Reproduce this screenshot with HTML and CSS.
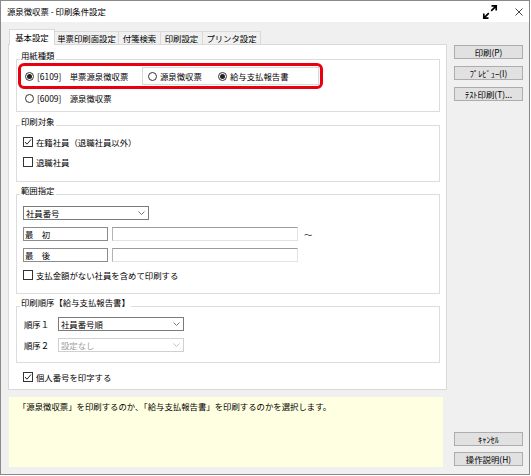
FILE: index.html
```html
<!DOCTYPE html>
<html lang="ja">
<head>
<meta charset="utf-8">
<title>源泉徴収票 - 印刷条件設定</title>
<link rel="stylesheet" href="styles.css">
</head>
<body>
<div class="window">
  <div class="titlebar">
    <div class="title">源泉徴収票 - 印刷条件設定</div>
    <div class="title-icons">
      <svg class="icon-expand" width="16" height="16" viewBox="0 0 16 16"><path d="M9.2 6.8 L14.2 1.8 M9.5 1.8 H14.2 V6.5 M6.8 9.2 L1.8 14.2 M1.8 9.5 V14.2 H6.5" fill="none" stroke="#000" stroke-width="1.7"/></svg>
      <svg class="icon-close" width="8" height="8" viewBox="0 0 8 8"><path d="M0.5 0.5 L7.5 7.5 M7.5 0.5 L0.5 7.5" fill="none" stroke="#333" stroke-width="0.9"/></svg>
    </div>
  </div>
  <div class="client">
    <div class="main">
      <div class="tabs">
        <div class="tab active t1">基本設定</div>
        <div class="tab t2">単票印刷面設定</div>
        <div class="tab t3">付箋検索</div>
        <div class="tab t4">印刷設定</div>
        <div class="tab t5">プリンタ設定</div>
      </div>
      <div class="panel">
        <div class="group g1">
          <div class="group-title">用紙種類</div>
          <div class="highlight">
            <div class="opt"><span class="radio checked"></span><span>[6109]　単票源泉徴収票</span></div>
            <div class="subframe">
              <div class="opt opt-w"><span class="radio"></span><span>源泉徴収票</span></div>
              <div class="opt"><span class="radio checked"></span><span>給与支払報告書</span></div>
            </div>
          </div>
          <div class="opt row row-radio"><span class="radio"></span><span>[6009]　源泉徴収票</span></div>
        </div>

        <div class="group g2">
          <div class="group-title">印刷対象</div>
          <div class="opt row chk1"><span class="check on"><svg width="8" height="8" viewBox="0 0 8 8"><path d="M1 4 L3 6.2 L7 1.5" fill="none" stroke="#222" stroke-width="1"/></svg></span><span>在籍社員（退職社員以外）</span></div>
          <div class="opt row chk2"><span class="check"></span><span>退職社員</span></div>
        </div>

        <div class="group g3">
          <div class="group-title">範囲指定</div>
          <div class="select sel-range"><span>社員番号</span><svg width="7" height="4" viewBox="0 0 7 4"><path d="M0.5 0.5 L3.5 3.5 L6.5 0.5" fill="none" stroke="#666" stroke-width="0.9"/></svg></div>
          <div class="range-row r1">
            <div class="label-box">最　初</div>
            <div class="input"></div>
            <span class="tilde">～</span>
          </div>
          <div class="range-row r2">
            <div class="label-box">最　後</div>
            <div class="input"></div>
          </div>
          <div class="opt row chk3"><span class="check"></span><span>支払金額がない社員を含めて印刷する</span></div>
        </div>

        <div class="group g4">
          <div class="group-title">印刷順序【給与支払報告書】</div>
          <div class="order-row o1">
            <span class="order-label">順序１</span>
            <div class="select sel-order"><span>社員番号順</span><svg width="7" height="4" viewBox="0 0 7 4"><path d="M0.5 0.5 L3.5 3.5 L6.5 0.5" fill="none" stroke="#666" stroke-width="0.9"/></svg></div>
          </div>
          <div class="order-row o2">
            <span class="order-label">順序２</span>
            <div class="select sel-order disabled"><span>設定なし</span><svg width="7" height="4" viewBox="0 0 7 4"><path d="M0.5 0.5 L3.5 3.5 L6.5 0.5" fill="none" stroke="#bbb" stroke-width="0.9"/></svg></div>
          </div>
        </div>

        <div class="opt row chk4"><span class="check on"><svg width="8" height="8" viewBox="0 0 8 8"><path d="M1 4 L3 6.2 L7 1.5" fill="none" stroke="#222" stroke-width="1"/></svg></span><span>個人番号を印字する</span></div>
      </div>
      <div class="hint">「源泉徴収票」を印刷するのか、「給与支払報告書」を印刷するのかを選択します。</div>
    </div>
    <div class="side">
      <div class="btn-group">
        <div class="btn">印刷(P)</div>
        <div class="btn">ﾌﾟﾚﾋﾞｭｰ(I)</div>
        <div class="btn">ﾃｽﾄ印刷(T)...</div>
      </div>
      <div class="btn-group btn-group-bottom">
        <div class="btn">ｷｬﾝｾﾙ</div>
        <div class="btn">操作説明(H)</div>
      </div>
    </div>
  </div>
</div>
</body>
</html>
```
FILE: styles.css
```css
* { box-sizing: border-box; }
html, body { margin: 0; padding: 0; background: #fff; }
body {
  font-family: "Noto Sans CJK JP", "Noto Sans", sans-serif;
  font-size: 8.4px;
  color: #000;
  line-height: 1;
}
.window {
  width: 530px;
  height: 475px;
  border: 1px solid #8a8a8a;
  background: #f0f0f0;
  display: flex;
  flex-direction: column;
}
.titlebar {
  height: 21px;
  flex: none;
  background: #fff;
  display: flex;
  align-items: center;
  justify-content: space-between;
  padding-left: 6px;
  padding-right: 6px;
}
.title-icons { display: flex; align-items: center; }
.icon-expand { margin-right: 17px; }
.client {
  flex: 1;
  display: flex;
  gap: 7px;
  padding: 7px 6px 7px 7px;
}
.main { width: 439px; display: flex; flex-direction: column; }
.tabs {
  display: flex;
  align-items: flex-end;
  height: 16px;
  padding-left: 1px;
  margin-bottom: -1px;
}
.tab {
  height: 13px;
  margin-bottom: 1px;
  border: 1px solid #d9d9d9;
  border-bottom: none;
  background: #f0f0f0;
  display: flex;
  align-items: center;
  justify-content: center;
  margin-left: -1px;
}
.tab.t1 { margin-left: 0; width: 46px; }
.tab.t2 { width: 65px; }
.tab.t3 { width: 43px; }
.tab.t4 { width: 43px; }
.tab.t5 { width: 59px; }
.tab.active {
  height: 16px;
  margin-bottom: 0;
  background: #fff;
  position: relative;
  z-index: 1;
}
.panel {
  height: 346px;
  background: #fff;
  border: 1px solid #d9d9d9;
  padding: 14px 6px 0 7px;
}
.group {
  border: 1px solid #dcdcdc;
  padding: 0 6px;
}
.group-title {
  width: fit-content;
  height: 11px;
  line-height: 11px;
  background: #fff;
  margin: -10px 0 0 -3px;
  padding: 0 1px;
}
.g1 { padding-bottom: 6px; }
.g2 { margin-top: 13px; padding-bottom: 12px; }
.g3 { margin-top: 12px; padding-bottom: 11px; }
.g4 { margin-top: 12px; padding-bottom: 10px; }

.opt { display: flex; align-items: center; white-space: nowrap; }
.row { height: 14px; }
.radio {
  width: 9px;
  height: 9px;
  border: 1px solid #333;
  border-radius: 50%;
  background: #fff;
  margin-right: 3px;
  flex: none;
  display: flex;
  align-items: center;
  justify-content: center;
}
.radio.checked::after {
  content: "";
  width: 5px;
  height: 5px;
  border-radius: 50%;
  background: #222;
}
.check {
  width: 10px;
  height: 10px;
  border: 1px solid #333;
  background: #fff;
  margin-right: 3px;
  flex: none;
  display: flex;
  align-items: center;
  justify-content: center;
}

.highlight {
  margin-top: 2px;
  margin-left: -5px;
  width: 305px;
  height: 26px;
  border: 3px solid #e8000f;
  border-radius: 6px;
  display: flex;
  align-items: center;
  padding: 0 1px 0 4px;
}
.subframe {
  margin-left: auto;
  width: 177px;
  height: 18px;
  border: 1px solid #d9d9d9;
  display: flex;
  align-items: center;
  padding-left: 5px;
}
.opt-w { width: 70px; }
.row-radio { margin-top: 2px; padding-left: 2px; }

.chk1 { margin-top: 8px; }
.chk2 { margin-top: 6px; }

.select {
  height: 14px;
  border: 1px solid #7a7a7a;
  background: #fff;
  display: flex;
  align-items: center;
  justify-content: space-between;
  padding: 0 3px 0 2px;
}
.sel-range { width: 126px; margin-top: 10px; }
.range-row { display: flex; align-items: center; height: 14px; margin-top: 7px; }
.label-box {
  width: 85px;
  height: 14px;
  border: 1px solid #8c8c8c;
  background: #fff;
  display: flex;
  align-items: center;
  padding-left: 1px;
}
.input {
  width: 186px;
  height: 14px;
  margin-left: 4px;
  background: #fff;
  border-top: 1px solid #9a9a9a;
  border-left: 1px solid #b4b4b4;
  border-right: 1px solid #e3e3e3;
  border-bottom: 1px solid #e3e3e3;
}
.tilde { margin-left: 6px; color: #333; }
.chk3 { margin-top: 6px; }

.order-row { display: flex; align-items: center; height: 14px; }
.o1 { margin-top: 9px; }
.o2 { margin-top: 7px; }
.order-label { width: 34px; margin-left: 1px; }
.sel-order { width: 126px; }
.select.disabled { border-color: #d0d0d0; color: #a0a0a0; }

.chk4 { margin-top: 7px; margin-left: 7px; }

.hint {
  margin-top: 7px;
  margin-left: 1px;
  width: 434px;
  height: 70px;
  background: #ffffe1;
  padding: 4px 9px;
  line-height: 11px;
}

.side {
  width: 69px;
  display: flex;
  flex-direction: column;
  justify-content: space-between;
  padding-top: 16px;
  padding-bottom: 1px;
}
.btn-group { display: flex; flex-direction: column; gap: 7px; }
.btn-group-bottom { gap: 6px; }
.btn {
  height: 14px;
  background: #e1e1e1;
  border: 1px solid #adadad;
  display: flex;
  align-items: center;
  justify-content: center;
  white-space: nowrap;
}
```
